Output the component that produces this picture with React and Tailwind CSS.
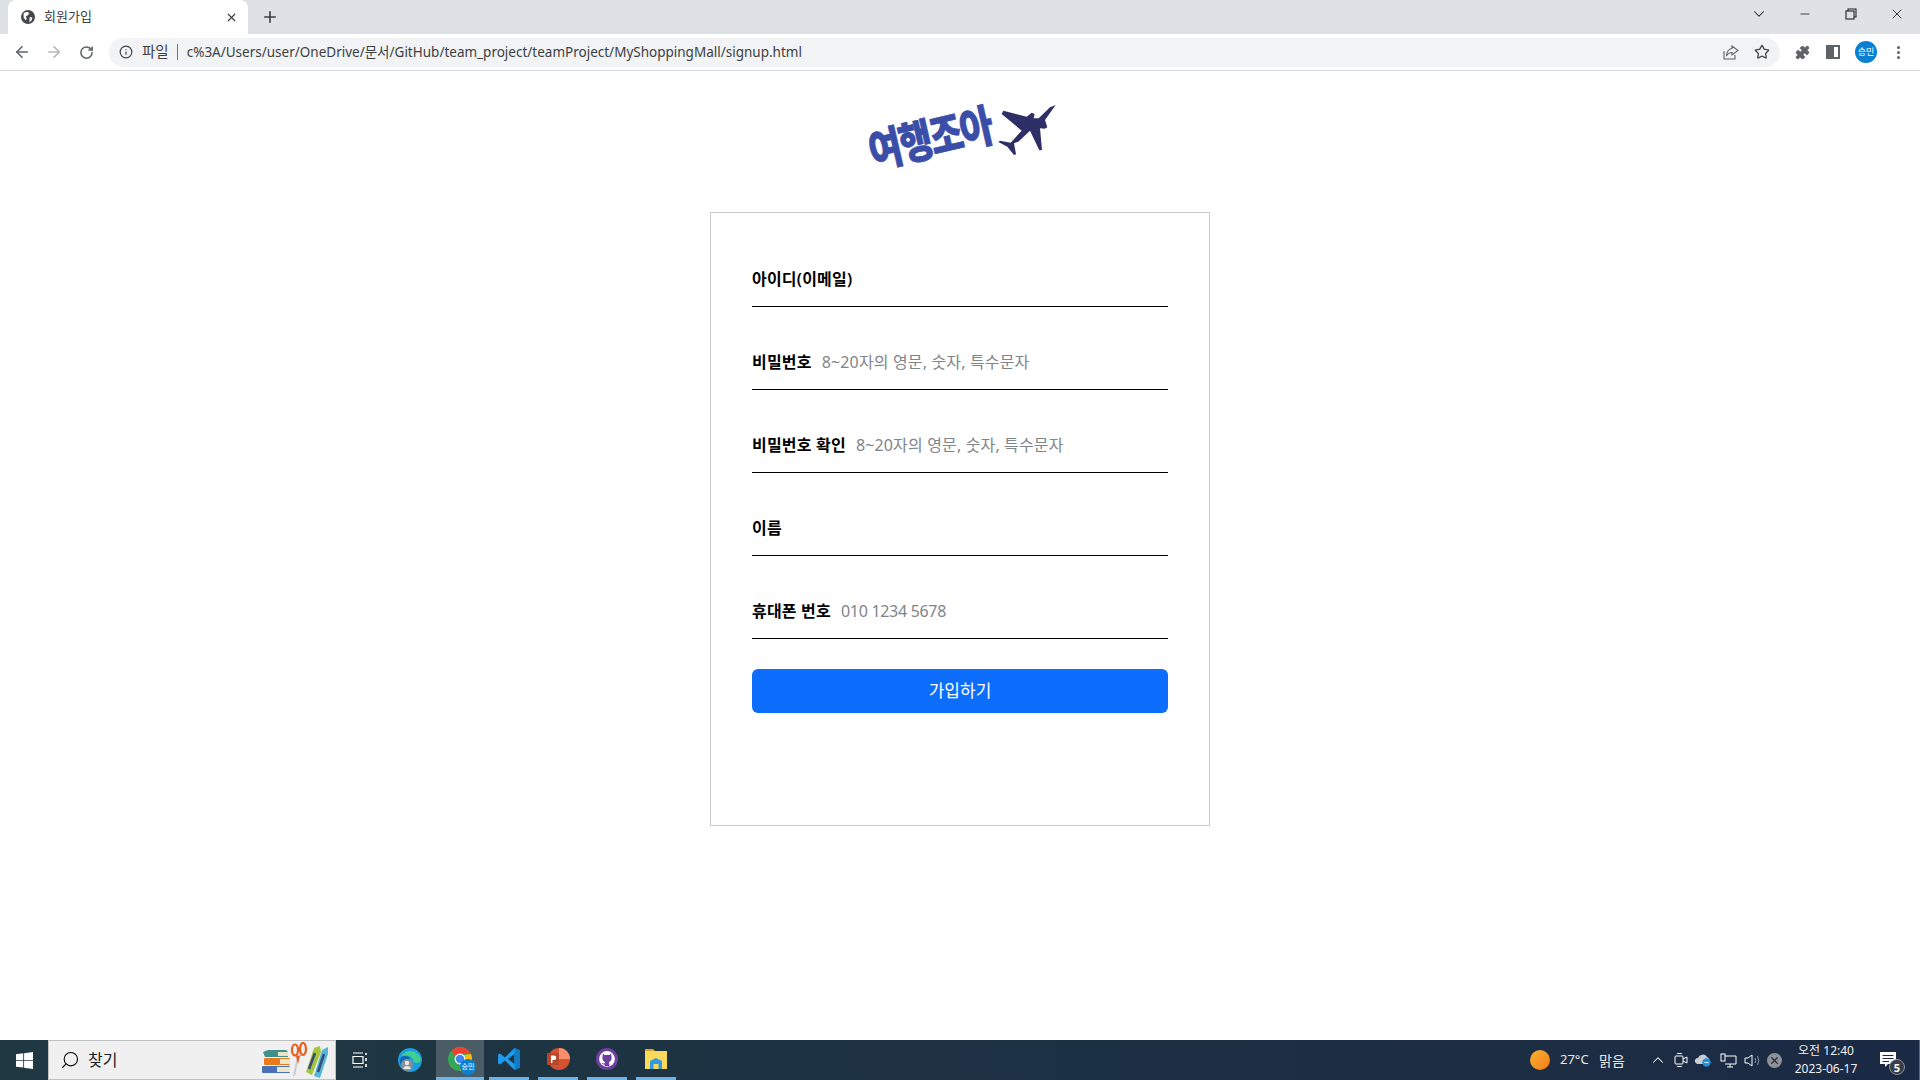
import { ArrowLeft, ArrowRight, RotateCw, Info, Star, Puzzle, ChevronDown, ChevronUp, Minus, X, Plus, Search } from 'lucide-react';

const FIELDS = [
  { label: '아이디(이메일)' },
  { label: '비밀번호', hint: '8~20자의 영문, 숫자, 특수문자' },
  { label: '비밀번호 확인', hint: '8~20자의 영문, 숫자, 특수문자' },
  { label: '이름' },
  { label: '휴대폰 번호', hint: '010 1234 5678', digits: true },
];

const KR = "font-['Noto_Sans','Noto_Sans_CJK_KR',sans-serif]";

const Plane = () => (
  <svg width="66" height="60" viewBox="0 0 198 180" className="shrink-0">
    <path
      fill="#2d2f66"
      d="M197 15 L165 60 L172 82 L164 86 L150 85 L156 150 L148 151 L120 92 L85 125 L72 130 L78 163 L72 165 L52 140 L25 126 L30 122 L62 128 L95 92 L35 42 L40 32 L110 50 L125 38 L134 42 L131 55 L146 55 L180 22 Z"
    />
  </svg>
);

const Logo = () => (
  <div className="flex h-[141px] items-start justify-center pt-[29px]">
    <div className="flex items-start pl-[3px]">
      <div className="mt-[16px] -mr-[2px] -rotate-[13deg] scale-y-[1.25] text-[36px] leading-[38px] font-black tracking-[-2px] text-[#3a4ea8] [-webkit-text-stroke:0.6px_#3a4ea8] font-['Noto_Sans_CJK_KR',sans-serif]">
        여행조아
      </div>
      <Plane />
    </div>
  </div>
);

const Field = ({ label, hint, digits }) => (
  <div className="flex h-[83px] items-end">
    <div className="flex h-[50px] w-full items-start border-b border-black pt-[10px] text-[16px] leading-[24px]">
      <span className="font-semibold tracking-[0.2px] text-black">{label}</span>
      {hint && <span className={`ml-[10px] text-[#80858a] ${digits ? 'tracking-[-0.3px]' : 'tracking-[0.15px]'}`}>{hint}</span>}
    </div>
  </div>
);

const Globe = () => (
  <svg width="14" height="14" viewBox="0 0 16 16" className="shrink-0">
    <circle cx="8" cy="8" r="8" fill="#45484d" />
    <path fill="#fff" d="M3 3.5 L7 2 L9.5 3.5 L8 6 L5.5 7 L6.5 9.5 L5.5 12 L3 8.5 Z M10 8 L13 8.5 L12 12 L9.5 14 Z" />
  </svg>
);

const TabStrip = () => (
  <div className="flex h-[34px] shrink-0 items-end bg-[#dee1e6] pl-[8px]">
    <div className="flex h-[34px] w-[240px] items-center rounded-t-[8px] bg-white pl-[13px] pr-[10px]">
      <Globe />
      <span className="ml-[9px] flex-1 text-[13px] text-[#3c4043]">회원가입</span>
      <X size={13} strokeWidth={2.2} className="text-[#3c4043]" />
    </div>
    <div className="flex h-[34px] w-[44px] items-center justify-center">
      <Plus size={18} strokeWidth={2.2} className="text-[#3c4043]" />
    </div>
    <div className="flex h-[28px] flex-1 items-center self-start justify-end text-[#202124]">
      <div className="flex w-[46px] justify-center"><ChevronDown size={18} strokeWidth={1.4} /></div>
      <div className="flex w-[46px] justify-center"><Minus size={14} strokeWidth={1.4} /></div>
      <div className="flex w-[46px] justify-center">
        <svg width="12" height="12" viewBox="0 0 12 12" fill="none" stroke="#202124" strokeWidth="1.1">
          <rect x="1" y="3" width="8" height="8" />
          <path d="M3 3 V1 H11 V9 H9" />
        </svg>
      </div>
      <div className="flex w-[46px] justify-center"><X size={16} strokeWidth={1.3} /></div>
    </div>
  </div>
);

const ShareBox = () => (
  <svg width="16" height="16" viewBox="0 0 16 16" fill="none" stroke="#5f6368" strokeWidth="1.1" className="mr-[15px]">
    <path d="M1 7 V15 H12 V11" />
    <path d="M9 2 L15 6.5 L9 11 V8.5 C6 8.5 4.5 10 3.5 12 C3.5 8 6 5 9 4.5 Z" />
  </svg>
);

const Toolbar = () => (
  <div className="flex h-[37px] shrink-0 items-center border-b border-[#d9dbde] bg-white pl-[6px] text-[#5f6368]">
    <div className="flex w-[32px] justify-center"><ArrowLeft size={18} strokeWidth={2.2} /></div>
    <div className="flex w-[32px] justify-center text-[#b4b7bb]"><ArrowRight size={18} strokeWidth={2.2} /></div>
    <div className="flex w-[32px] justify-center"><RotateCw size={15} strokeWidth={2.4} /></div>
    <div className="ml-[7px] flex h-[29px] w-[1671px] items-center rounded-full bg-[#f1f3f4] pl-[10px] pr-[10px]">
      <Info size={14} strokeWidth={2} className="text-[#3c4043]" />
      <span className="ml-[9px] text-[14.5px] text-[#3c4043]">파일</span>
      <span className="ml-[8px] h-[16px] w-px bg-[#70757a]" />
      <span className="ml-[9px] flex-1 text-[13.5px] text-[#3c4043]">c%3A/Users/user/OneDrive/문서/GitHub/team_project/teamProject/MyShoppingMall/signup.html</span>
      <ShareBox />
      <Star size={16} strokeWidth={2} className="text-[#45484d]" />
    </div>
    <div className="flex w-[30px] justify-end">
      <Puzzle size={15} fill="#5f6368" strokeWidth={1.5} />
    </div>
    <div className="ml-[16px] h-[14px] w-[14px] border-[2px] border-l-[8px] border-[#5f6368]" />
    <div className="ml-[15px] flex h-[22px] w-[22px] items-center justify-center rounded-full bg-[#0b7fd1] text-[9px] text-white">승민</div>
    <div className="ml-[20px] flex flex-col gap-[2px]">
      <span className="h-[3px] w-[3px] rounded-full bg-[#5f6368]" />
      <span className="h-[3px] w-[3px] rounded-full bg-[#5f6368]" />
      <span className="h-[3px] w-[3px] rounded-full bg-[#5f6368]" />
    </div>
  </div>
);

const SignupPage = () => (
  <main className={`flex-1 bg-white ${KR}`}>
    <Logo />
    <div className="mx-auto h-[614px] w-[500px] border border-[#cccccc] px-[41px] pt-[11px]">
      {FIELDS.map((f) => (
        <Field key={f.label} label={f.label} hint={f.hint} digits={f.digits} />
      ))}
      <button className="mt-[30px] h-[44px] w-full rounded-[6px] bg-[#0d6efd] text-[17px] text-white">가입하기</button>
    </div>
  </main>
);

const WinLogo = () => (
  <svg width="17" height="17" viewBox="0 0 16 16" fill="#fff">
    <path d="M0 2.2 L6.8 1.2 V7.5 H0 Z M7.6 1.1 L16 0 V7.5 H7.6 Z M0 8.3 H6.8 V14.7 L0 13.8 Z M7.6 8.3 H16 V16 L7.6 14.8 Z" />
  </svg>
);

const Doodle = () => (
  <svg width="68" height="36" viewBox="0 0 68 36">
    <path d="M1 10 L6 8 H24 L26 10 V15 H3 Z" fill="#3f8f8f" />
    <rect x="16" y="10" width="10" height="4" fill="#e9e2c4" />
    <rect x="2" y="16" width="26" height="7" rx="1" fill="#e87a1c" />
    <rect x="18" y="17" width="10" height="5" fill="#efe6c8" />
    <rect x="0" y="24" width="28" height="7" rx="1" fill="#4a6fb5" />
    <rect x="15" y="25" width="13" height="5" fill="#efe6c8" />
    <path d="M31 34 L35 14 L37 14 L33 34 Z" fill="#c9c9c9" />
    <ellipse cx="33" cy="8" rx="3" ry="5.5" fill="none" stroke="#ea5f1e" strokeWidth="2.2" />
    <ellipse cx="41" cy="7" rx="3" ry="6" fill="none" stroke="#ea5f1e" strokeWidth="2.2" />
    <path d="M34 14 L36 22 L38 14 L40 13 Z" fill="#ea5f1e" />
    <path d="M44 30 L52 6 L58 4 L59 10 L50 33 Z" fill="#a5c53a" />
    <path d="M47 27 L53 11" stroke="#3c4a7a" strokeWidth="2.5" />
    <path d="M52 34 L60 8 L66 5 L66 12 L58 36 Z" fill="#53b8d6" />
    <path d="M56 30 L62 12" stroke="#3c4a7a" strokeWidth="2.5" />
  </svg>
);

const TaskView = () => (
  <svg width="16" height="16" viewBox="0 0 16 16" fill="none" stroke="#fff" strokeWidth="1.2">
    <path d="M1 1 H11 M1 15 H11 M1 4.5 H11 V11.5 H1 Z" />
    <path d="M14 1 V3 M14 6 V9 M14 12 V15" strokeWidth="1.6" />
  </svg>
);

const Edge = () => (
  <svg width="24" height="24" viewBox="0 0 24 24">
    <circle cx="12" cy="12" r="12" fill="#1b9de2" />
    <path d="M3 9 C6 1 20 1 23 11 C23 16 15 16 15 12 C14 8 7 6 3 9 Z" fill="#3fcf8e" />
    <path d="M3 9 C7 7 11 8 12 10 L5 20 C2 17 1 13 3 9 Z" fill="#0f6ab4" />
    <circle cx="9" cy="17" r="6" fill="#8a8f93" />
    <circle cx="9" cy="15" r="2.2" fill="#e8e8e8" />
    <path d="M5 21 C6 17 12 17 13 21 Z" fill="#e8e8e8" />
  </svg>
);

const Chrome = () => (
  <div className="relative h-[24px] w-[24px]">
    <svg width="24" height="24" viewBox="0 0 24 24">
      <circle cx="12" cy="12" r="12" fill="#34a853" />
      <path d="M12 0 A12 12 0 0 1 23 7 H12 A5 5 0 0 0 7.5 10 L3.5 3.5 A12 12 0 0 1 12 0 Z" fill="#ea4335" />
      <path d="M23 7 A12 12 0 0 1 12 24 L16.5 14 A5 5 0 0 0 16 8 Z" fill="#fbbc04" />
      <circle cx="12" cy="12" r="5.4" fill="#fff" />
      <circle cx="12" cy="12" r="4.2" fill="#4285f4" />
    </svg>
    <span className="absolute -bottom-[4px] -right-[4px] flex h-[16px] w-[16px] items-center justify-center rounded-full bg-[#0b7fd1] text-[7px] leading-none text-white">승민</span>
  </div>
);

const VSCode = () => (
  <svg width="24" height="24" viewBox="0 0 24 24">
    <path d="M17.5 1 L23 3.5 V20.5 L17.5 23 L8 13.5 L3 17.5 L1 16.3 V7.7 L3 6.5 L8 10.5 Z M17.5 7 L11 12 L17.5 17 Z" fill="#1f9cf0" />
    <path d="M17.5 1 L23 3.5 V20.5 L17.5 23 Z" fill="#0f7cc8" />
  </svg>
);

const Powerpoint = () => (
  <svg width="24" height="24" viewBox="0 0 24 24">
    <circle cx="13" cy="12" r="11" fill="#d35230" />
    <path d="M13 1 A11 11 0 0 1 24 12 H13 Z" fill="#ff8f6b" />
    <rect x="1" y="6" width="12" height="12" rx="1" fill="#b7472a" />
    <path d="M5 8.5 H8 A2.2 2.2 0 0 1 8 13 H6.4 V16 H5 Z" fill="#fff" />
  </svg>
);

const GithubDesktop = () => (
  <svg width="22" height="22" viewBox="0 0 24 24">
    <circle cx="12" cy="12" r="12" fill="#6f3fa0" />
    <circle cx="12" cy="12" r="8.6" fill="#fff" />
    <path d="M7.5 6 L9.5 7.5 H14.5 L16.5 6 L17 10 C17.5 13 15.5 15 13.8 15.4 C14.5 16 14.6 17 14.6 20 H9.4 V18 C7.5 18.3 7 17 6 16 C7 16 7.8 17 9.4 16.8 C9.4 16 9.7 15.7 10.2 15.4 C8.5 15 6.5 13 7 10 Z" fill="#6f3fa0" />
  </svg>
);

const Explorer = () => (
  <svg width="24" height="24" viewBox="0 0 24 24">
    <path d="M1 2 H9 L11 4 H1 Z" fill="#d9a520" />
    <rect x="1" y="4" width="22" height="18" fill="#fbd75b" />
    <path d="M6 22 V14 L12 11 L18 14 V22 H14.5 V17 H9.5 V22 Z" fill="#2f9ae0" />
  </svg>
);

const TASK_APPS = [
  { key: 'code', icon: <VSCode /> },
  { key: 'ppt', icon: <Powerpoint /> },
  { key: 'gh', icon: <GithubDesktop /> },
  { key: 'files', icon: <Explorer /> },
];

const Tray = () => (
  <div className="flex items-center text-white">
    <span className="h-[20px] w-[20px] rounded-full bg-gradient-to-br from-[#f9b233] to-[#ef7b14]" />
    <span className="ml-[10px] w-[29px] text-[13px] text-[#e8e8e8]">27°C</span>
    <span className="ml-[10px] w-[29px] text-[14px] text-[#e8e8e8]">맑음</span>
    <ChevronUp size={18} strokeWidth={1.4} className="ml-[21px]" />
    <svg width="14" height="16" viewBox="0 0 14 16" fill="none" stroke="#fff" strokeWidth="1" className="ml-[7px]">
      <rect x="1" y="4" width="8" height="8" rx="1" />
      <path d="M9 7 L13 5 V11 L9 9 M3 1.5 H8 M3 14.5 H8" />
    </svg>
    <svg width="18" height="14" viewBox="0 0 18 14" className="ml-[6px]">
      <path d="M1 9 A3 3 0 0 1 4 5 A5 5 0 0 1 13 4 A4 4 0 0 1 14 11 H3 Z" fill="#c9cdd2" />
      <circle cx="12.5" cy="9.5" r="4.2" fill="#1b8fe0" />
      <path d="M10.5 9.5 H14.5" stroke="#fff" />
    </svg>
    <svg width="17" height="15" viewBox="0 0 17 15" fill="none" stroke="#fff" strokeWidth="1" className="ml-[8px]">
      <path d="M5 3 H16 V11 H5 M10 11 V14 M7 14 H13" />
      <rect x="1" y="1" width="4" height="7" />
    </svg>
    <svg width="17" height="15" viewBox="0 0 17 15" fill="none" stroke="#fff" strokeWidth="1" className="ml-[7px]">
      <path d="M1 5 H4 L8 2 V13 L4 10 H1 Z" />
      <path d="M11 5 Q12.5 7.5 11 10 M13.5 3 Q16 7.5 13.5 12" stroke="#8b95a3" />
    </svg>
    <span className="ml-[6px] flex h-[15px] w-[15px] items-center justify-center rounded-full bg-[#8e9198] text-[#2a3040]">
      <X size={11} strokeWidth={3} />
    </span>
    <div className="ml-[8px] flex w-[72px] flex-col items-center text-[12px] leading-[18px] text-[#f0f0f0]">
      <span>오전 12:40</span>
      <span>2023-06-17</span>
    </div>
    <div className="relative ml-[18px] h-[16px] w-[17px]">
      <svg width="17" height="16" viewBox="0 0 17 16" fill="#fff">
        <path d="M0 0 H16 V12 H8 L5 15 V12 H0 Z" />
        <path d="M2.5 3.5 H13.5 M2.5 6.5 H13.5 M2.5 9.5 H9" stroke="#1b2a42" />
      </svg>
      <span className="absolute -bottom-[7px] -right-[8px] flex h-[16px] w-[16px] items-center justify-center rounded-full border border-[#8a8f96] bg-[#3a3f47] text-[11px] font-bold leading-none">5</span>
    </div>
    <div className="ml-[22px] h-full w-px self-stretch bg-[#5a6677]" />
  </div>
);

const Taskbar = () => (
  <div className="flex h-[40px] shrink-0 items-stretch justify-between bg-gradient-to-r from-[#1f3842] to-[#1b2a44]">
    <div className="flex items-stretch">
      <div className="flex w-[48px] items-center justify-center"><WinLogo /></div>
      <div className="flex w-[288px] items-center border border-[#bfc1c3] bg-[#f0f0f0] pl-[11px] pr-[5px]">
        <Search size={20} strokeWidth={1.3} className="-scale-x-100 text-black" />
        <span className="ml-[8px] flex-1 text-[16px] text-[#222]">찾기</span>
        <Doodle />
      </div>
      <div className="flex w-[48px] items-center justify-center"><TaskView /></div>
      <div className="flex w-[52px] items-center justify-center"><Edge /></div>
      <div className="flex w-[48px] items-center justify-center border-b-[3px] border-[#6cb4e8] bg-[#4a5c65]">
        <Chrome />
      </div>
      {TASK_APPS.map((app) => (
        <div key={app.key} className="flex w-[49px] justify-center">
          <div className="flex w-[40px] items-center justify-center border-b-[3px] border-[#6cb4e8]">
            {app.icon}
          </div>
        </div>
      ))}
    </div>
    <Tray />
  </div>
);

const App = () => (
  <div className={`flex h-screen w-full flex-col overflow-hidden bg-white ${KR}`}>
    <TabStrip />
    <Toolbar />
    <SignupPage />
    <Taskbar />
  </div>
);

export default App;
